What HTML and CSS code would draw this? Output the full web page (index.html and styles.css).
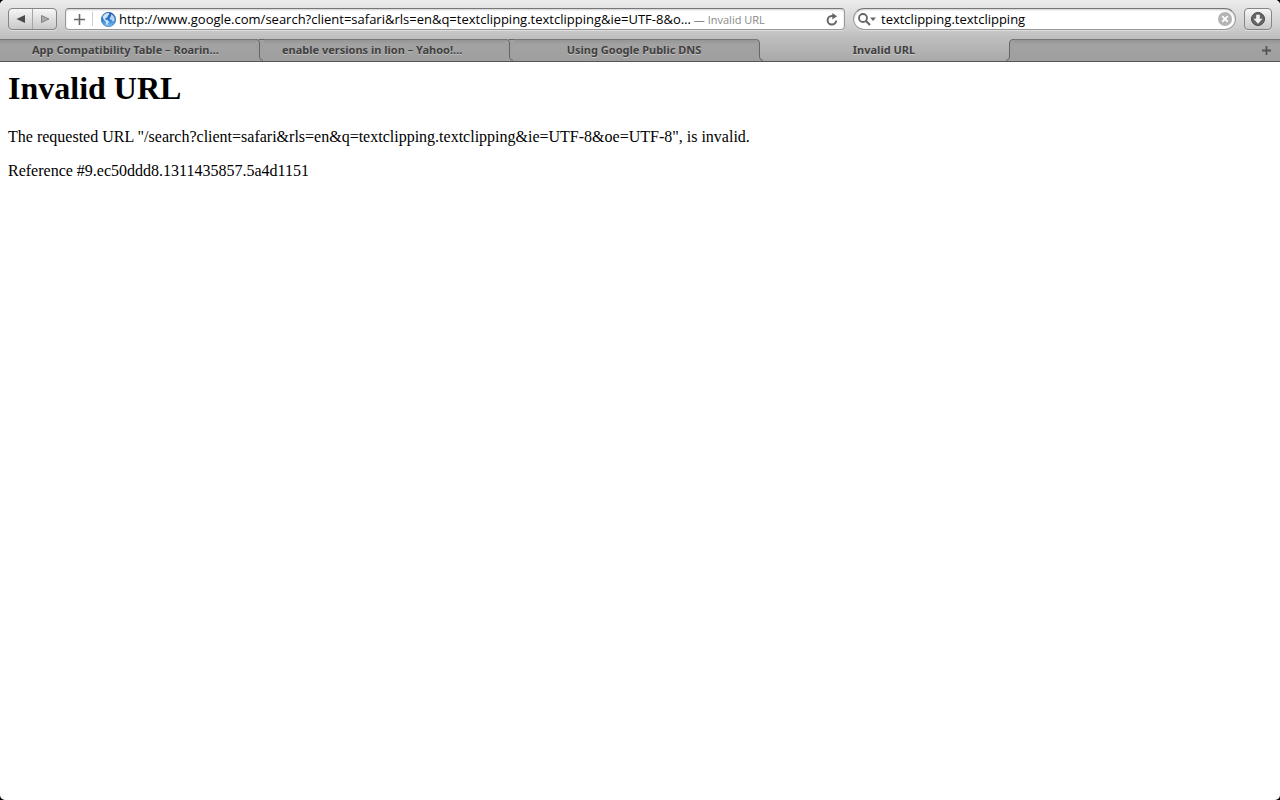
FILE: index.html
```html
<!DOCTYPE html>
<html lang="en">
<head>
    <meta charset="UTF-8">
    <meta name="viewport" content="width=device-width, initial-scale=1.0">
    <title>Invalid URL</title>
    <link rel="stylesheet" href="styles.css">
</head>
<body>
    <div class="window">
        <header class="chrome">
            <div class="toolbar">
                <div class="nav-buttons">
                    <button type="button" aria-label="Back">
                        <svg width="10" height="10" viewBox="0 0 10 10"><path d="M9 1v8L.5 5z" fill="#4b4b4b"/></svg>
                    </button>
                    <button type="button" aria-label="Forward">
                        <svg width="10" height="10" viewBox="0 0 10 10"><path d="M1.500 1.500v7L9 5z" fill="#aaa" stroke="#858585"/></svg>
                    </button>
                </div>

                <form class="field address">
                    <button type="button" class="add-bookmark" aria-label="Add bookmark">
                        <svg width="11" height="11" viewBox="0 0 11 11"><path d="M5.500 0v11M0 5.500h11" stroke="#666" stroke-width="1.600"/></svg>
                    </button>
                    <svg class="globe" width="15" height="15" viewBox="0 0 14 14">
                        <defs>
                            <linearGradient id="sea" x1="0" y1="0" x2="0" y2="1">
                                <stop offset="0" stop-color="#2a5ca6"/>
                                <stop offset=".5" stop-color="#2f7bd0"/>
                                <stop offset="1" stop-color="#79c4f8"/>
                            </linearGradient>
                        </defs>
                        <circle cx="7" cy="7" r="6.700" fill="url(#sea)" stroke="#2c5f9f" stroke-width=".6"/>
                        <path d="M1.500 4.500C2.500 2 5 .8 7 1l1 1.200-1.500 1-.5 1.600-2 1 .2 1.400 2 .5 1.300 1.500-1 1.500-.5 2-1.200-1.500-.3-2.200-2-1.800z" fill="#cfe4f7"/>
                        <path d="M9.500 2l2 1.500 1.200 2.500-.2 2.500-1.500.5-1-1.500-1.500-.5-.3-1.500 1-1.200z" fill="#b5d7f5"/>
                    </svg>
                    <input class="url" type="text" aria-label="Address" value="http://www.google.com/search?client=safari&amp;rls=en&amp;q=textclipping.textclipping&amp;ie=UTF-8&amp;o…">
                    <span class="page-title">— Invalid URL</span>
                    <button type="button" aria-label="Reload">
                        <svg width="12" height="13" viewBox="0 0 12 13">
                            <path d="M7.200 3H5.800a4.300 4.300 0 1 0 4.400 4.700" fill="none" stroke="#666" stroke-width="2"/>
                            <path d="M6.300 0l4.700 3.200-4.700 3.300z" fill="#666"/>
                        </svg>
                    </button>
                </form>

                <form class="field search">
                    <button type="button" aria-label="Search options">
                        <svg width="18" height="13" viewBox="0 0 18 13">
                            <circle cx="5" cy="5" r="4" fill="none" stroke="#666" stroke-width="1.800"/>
                            <path d="M8 8l4 4" stroke="#666" stroke-width="2.200"/>
                            <path d="M12 4.500h6l-3 3.500z" fill="#666"/>
                        </svg>
                    </button>
                    <input type="text" aria-label="Search" value="textclipping.textclipping">
                    <button type="button" aria-label="Clear search">
                        <svg width="14" height="14" viewBox="0 0 14 14">
                            <circle cx="7" cy="7" r="7" fill="#b3b3b3"/>
                            <path d="M4.200 4.200l5.600 5.600M9.800 4.200L4.200 9.800" stroke="#fff" stroke-width="1.800"/>
                        </svg>
                    </button>
                </form>

                <button type="button" class="downloads" aria-label="Downloads">
                    <svg width="14" height="14" viewBox="0 0 14 14">
                        <circle cx="7" cy="7" r="6.500" fill="#666" stroke="#484848"/>
                        <path d="M5.200 2.800h3.600v4h2.700L7 11.700 2.500 6.800h2.700z" fill="#f2f2f2"/>
                    </svg>
                </button>
            </div>

            <nav class="tabs">
                <a class="tab first cut" href="#">App Compatibility Table – Roarin…</a>
                <svg class="edge" width="8" height="22" viewBox="0 0 8 22">
                    <path class="shade" d="M0 0h8v22H0z"/>
                    <path class="line" d="M0 .5Q3.500 .5 3.500 4v14Q3.500 21 7 21.500M3 .5h5"/>
                </svg>
                <a class="tab cut" href="#">enable versions in lion – Yahoo!…</a>
                <svg class="edge" width="8" height="22" viewBox="0 0 8 22">
                    <path class="shade" d="M0 0h8v22H0z"/>
                    <path class="line" d="M0 .5Q3.500 .5 3.500 4v14Q3.500 21 7 21.500M3 .5h5"/>
                </svg>
                <a class="tab" href="#">Using Google Public DNS</a>
                <svg class="edge" width="8" height="22" viewBox="0 0 8 22">
                    <path class="shade" d="M0 .5Q3.500 .5 3.500 4v14Q3.500 21 7 22H0z"/>
                    <path class="line" d="M0 .5Q3.500 .5 3.500 4v14Q3.500 21 7 21.500"/>
                </svg>
                <a class="tab active" href="#" aria-current="page">Invalid URL</a>
                <svg class="edge" width="8" height="22" viewBox="0 0 8 22">
                    <path class="shade" d="M8 .5Q3.500 .5 3.500 4v14Q3.500 21 0 22H8z"/>
                    <path class="line" d="M8 .5Q3.500 .5 3.500 4v14Q3.500 21 0 21.500"/>
                </svg>
                <div class="tab-space">
                    <button type="button" aria-label="New tab">
                        <svg width="9" height="9" viewBox="0 0 9 9"><path d="M4.500 0v9M0 4.500h9" stroke="#555" stroke-width="1.800"/></svg>
                    </button>
                </div>
            </nav>
        </header>

        <main class="page">
            <h1>Invalid URL</h1>
            <p>The requested URL "/search?client=safari&amp;rls=en&amp;q=textclipping.textclipping&amp;ie=UTF-8&amp;oe=UTF-8", is invalid.</p>
            <p>Reference #9.ec50ddd8.1311435857.5a4d1151</p>
        </main>
    </div>
</body>
</html>
```

FILE: styles.css
```css
body {
    margin: 0;
    background: #000;
    font-family: "Open Sans", "Noto Sans", sans-serif;
    font-size: 13px;
}
.window {
    min-height: 100vh;
    background: #fff;
    border-radius: 5px;
    overflow: hidden;
}
button {
    display: flex;
    align-items: center;
    justify-content: center;
    padding: 0;
    border: none;
    background: none;
}
input {
    min-width: 0;
    padding: 0;
    border: none;
    outline: none;
    background: none;
    font: inherit;
    color: #000;
}
.chrome {
    background: linear-gradient(#ececec, #d2d2d2 24px, #bcbcbc 39px, #a9a9a9);
    border-bottom: 1px solid #555;
}
.toolbar {
    display: flex;
    gap: 8px;
    height: 23px;
    padding: 8px;
}
.nav-buttons,
.downloads {
    box-sizing: border-box;
    height: 22px;
    border: 1px solid #858585;
    border-radius: 4px;
    background: linear-gradient(#f6f6f6, #c9c9c9);
    box-shadow: 0 1px 0 rgba(255, 255, 255, 0.4);
}
.nav-buttons {
    display: flex;
    width: 49px;
}
.nav-buttons button {
    flex: 1;
}
.nav-buttons button + button {
    border-left: 1px solid #a6a6a6;
}
.downloads {
    width: 28px;
}
.field {
    display: flex;
    align-items: center;
    box-sizing: border-box;
    height: 22px;
    border: 1px solid #999;
    border-top-color: #777;
    background: #fff;
    box-shadow: inset 0 1px 2px rgba(0, 0, 0, 0.2), 0 1px 0 rgba(255, 255, 255, 0.4);
}
.address {
    flex: 772;
    padding-right: 6px;
    border-radius: 4px;
}
.add-bookmark {
    width: 27px;
    height: 14px;
    border-right: 1px solid #ccc;
}
.globe {
    margin: 0 3px 0 8px;
}
.url {
    field-sizing: content;
}
.page-title {
    flex: 1;
    margin-left: 3px;
    font-size: 11px;
    color: #888;
    white-space: nowrap;
}
.search {
    flex: 374;
    padding: 0 3px 0 4px;
    border-radius: 11px;
}
.search input {
    flex: 1;
    margin-left: 5px;
}
.tabs {
    display: flex;
    height: 22px;
    font-family: "Noto Sans", sans-serif;
    font-size: 11px;
    font-weight: bold;
}
.tab {
    box-sizing: border-box;
    flex: 0 1 242px;
    padding: 0 20px 0 18px;
    border-top: 1px solid #777;
    background: linear-gradient(#959595, #a3a3a3 5px, #9e9e9e);
    line-height: 20px;
    text-align: center;
    text-decoration: none;
    text-shadow: 0 1px 0 rgba(255, 255, 255, 0.4);
    white-space: nowrap;
    overflow: hidden;
    color: #404040;
}
.tab.first {
    flex-basis: 256px;
    padding-left: 32px;
}
.tab.cut {
    text-align: left;
}
.tab.active {
    border-top-color: transparent;
    background: none;
}
.edge {
    flex: none;
}
.shade {
    fill: #a0a0a0;
}
.line {
    fill: none;
    stroke: #666;
}
.tab-space {
    display: flex;
    flex: 1;
    justify-content: flex-end;
    padding-right: 9px;
    border-top: 1px solid #777;
    background: linear-gradient(#959595, #a3a3a3 5px, #9e9e9e);
}
.page {
    padding: 8px;
    font-family: "Liberation Serif", serif;
    font-size: 16px;
}
.page h1 {
    margin: 0 0 21px;
    font-size: 32px;
    line-height: 37px;
}
.page p {
    margin: 0 0 16px;
    line-height: 18px;
}
```
